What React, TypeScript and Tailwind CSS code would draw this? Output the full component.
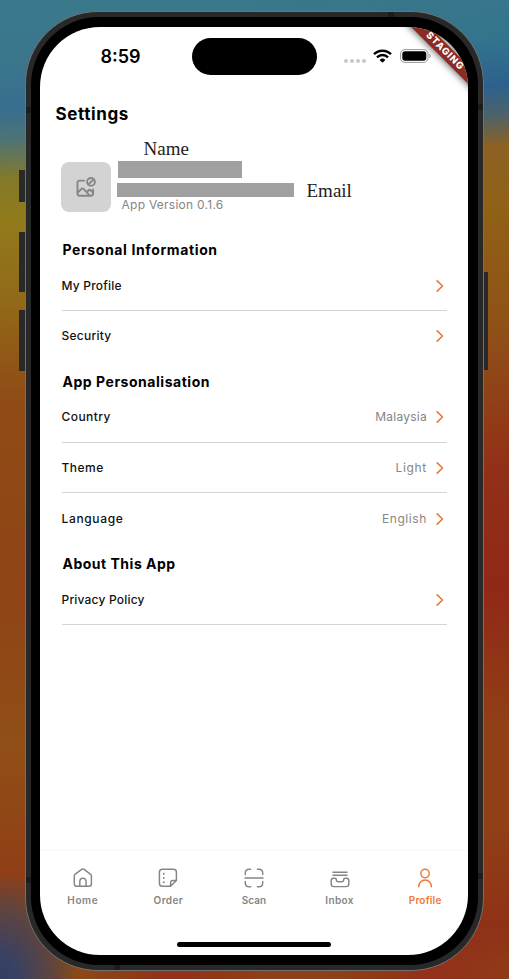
import type { ReactNode } from "react";

const headings = "font-['Inter','Liberation_Sans',sans-serif] font-bold text-black";

function Chevron() {
  return (
    <svg width="8" height="12" viewBox="0 0 8 12" fill="none" stroke="#e9783a" strokeWidth="1.6" strokeLinecap="round" strokeLinejoin="round">
      <path d="M1.2 .9 6.5 6 1.2 11.1" />
    </svg>
  );
}

function Row({ label, spacing, value, valueSpacing = "", divider = false }: { label: string; spacing: string; value?: string; valueSpacing?: string; divider?: boolean }) {
  return (
    <div className={`flex h-[50.7px] items-center border-b pt-[1px] pr-[3.5px] text-[12px] ${divider ? "border-[#d4d4d4]" : "border-transparent"}`}>
      <span className={`font-medium text-[#111] ${spacing}`}>{label}</span>
      <span className="flex-1" />
      {value && <span className={`mr-[8.5px] text-[#858585] ${valueSpacing}`}>{value}</span>}
      <Chevron />
    </div>
  );
}

function Section({ title, spacing, children }: { title: string; spacing: string; children: ReactNode }) {
  return (
    <section>
      <h2 className={`flex h-[30.3px] items-end pb-[1px] pl-[1px] text-[14px] leading-[18px] ${headings} ${spacing}`}>{title}</h2>
      {children}
    </section>
  );
}

function NavItem({ label, active = false, spacing, children }: { label: string; active?: boolean; spacing: string; children: ReactNode }) {
  return (
    <div className={`flex flex-1 flex-col items-center pt-[16.5px] ${active ? "text-[#e9783a]" : "text-[#858585]"}`}>
      <svg width="20" height="20" viewBox="0 0 20 20" fill="none" stroke="currentColor" strokeWidth="1.45" strokeLinecap="round" strokeLinejoin="round">
        {children}
      </svg>
      <span className={`mt-[5.5px] text-[10px] leading-[14px] font-semibold ${spacing}`}>{label}</span>
    </div>
  );
}

function StatusBar() {
  return (
    <div className="flex h-[59px] items-center">
      <div className="ml-[60.5px] w-[91px] pt-[1px] text-[18px] leading-[22px] font-semibold">8:59</div>
      <div className="h-[37px] w-[125px] rounded-full bg-black" />
      <div className="mt-[8px] ml-[27.5px] flex gap-[2px]">
        <i className="size-[4px] rounded-full bg-[#c9c9c9]" />
        <i className="size-[4px] rounded-full bg-[#c9c9c9]" />
        <i className="size-[4px] rounded-full bg-[#c9c9c9]" />
        <i className="size-[4px] rounded-full bg-[#c9c9c9]" />
      </div>
      <svg className="mb-[2px] ml-[7px]" width="19" height="14" viewBox="0 0 19 14" fill="none" stroke="#000" strokeWidth="2.4">
        <path d="M1 5.2a12.1 12.1 0 0 1 17 0M4 8.3a7.8 7.8 0 0 1 11 0" />
        <path d="M6.6 10.9a4.1 4.1 0 0 1 5.8 0L9.5 13.8Z" fill="#000" stroke="none" />
      </svg>
      <svg className="mb-[1px] ml-[7.5px]" width="31" height="14" viewBox="0 0 31 14">
        <rect x=".6" y=".6" width="27.4" height="12.8" rx="4.2" fill="none" stroke="#999" />
        <rect x="2.3" y="2.2" width="24" height="9.6" rx="2.8" />
        <path d="M29.4 4.8c1.7.7 1.7 3.7 0 4.4Z" fill="#999" />
      </svg>
    </div>
  );
}

export default function App() {
  return (
    <div className="relative h-[979px] w-[509px] overflow-hidden bg-[#8e4a15] pt-[11px] pl-[25px] font-['Inter','Liberation_Sans',sans-serif]">
      <div className="absolute inset-y-0 left-0 w-[255px] bg-[linear-gradient(177deg,#3a7a8c_0%,#3b768c_6%,#386e90_11%,#4d7377_14%,#83792a_18%,#917b1c_22%,#926a19_30%,#8f4c15_40%,#8f4316_60%,#904f16_75%,#903f16_88%,#8f4316_100%)]" />
      <div className="absolute inset-y-0 right-0 w-[254px] bg-[linear-gradient(174deg,#39778b_0%,#34758d_6%,#2c618d_11%,#4d6269_14%,#8c6123_17%,#906116_23%,#8f5117_35%,#923017_49%,#902817_61%,#904016_75%,#903f16_85%,#8f2e17_97%,#943516_100%)]" />
      <div className="absolute inset-x-0 bottom-0 h-[60px] bg-[linear-gradient(90deg,#6d4a35_0px,#8b4a15_75px,#93301a_170px,#904016_270px,#8f3f16_340px,#93301a_430px,#8f3a18_509px)] mask-[linear-gradient(to_top,black_30%,transparent)]" />
      <div className="absolute bottom-0 left-0 h-[110px] w-[80px] bg-[radial-gradient(78px_108px_at_0%_100%,#304064_0%,#3b4162_25%,#5e443f_65%,#8b4a1500_100%)]" />

      <i className="absolute top-[170px] left-[19px] h-[32px] w-[8px] bg-[#292929]" />
      <i className="absolute top-[232px] left-[19px] h-[60px] w-[8px] bg-[#292929]" />
      <i className="absolute top-[310px] left-[19px] h-[61px] w-[8px] bg-[#292929]" />
      <i className="absolute top-[272px] left-[482px] h-[98px] w-[6px] bg-[#292929]" />

      <div className="relative h-[960px] w-[459px] rounded-[73px] border border-[#707270] bg-[#282828] p-[5px]">
        <i className="absolute top-[95px] left-0 h-[6px] w-[5px] bg-[#1c1c1c]" />
        <i className="absolute top-[865px] left-0 h-[6px] w-[5px] bg-[#1c1c1c]" />
        <i className="absolute top-[92px] right-0 h-[6px] w-[5px] bg-[#1c1c1c]" />
        <i className="absolute top-[861px] right-0 h-[6px] w-[5px] bg-[#1c1c1c]" />
        <i className="absolute top-0 left-[362px] h-[5px] w-[6px] bg-[#1c1c1c]" />
        <i className="absolute bottom-0 left-[88px] h-[5px] w-[6px] bg-[#1c1c1c]" />
        <div className="relative h-[948px] w-[447px] rounded-[68px] bg-black pt-[10px] pl-[9px]">
          <div className="relative flex h-[928px] w-[428px] flex-col overflow-hidden rounded-[60px] bg-white">
            <StatusBar />
            <div className="absolute top-[17.5px] left-[354.5px] flex h-[12.5px] w-[100px] rotate-45 items-center justify-center bg-[#8e2a21] text-[9.5px] leading-[12px] font-extrabold tracking-[0.9px] text-white shadow-[0_0_7px_1px_#0009]">
              STAGING
            </div>
            <h1 className={`mt-[16px] ml-[15.5px] h-[24px] text-[17px] leading-[24px] ${headings} tracking-[0.6px]`}>Settings</h1>

            <div className="ml-[21px] flex h-[104px] pt-[8px]">
              <div className="mt-[28px] flex size-[50px] items-center justify-center rounded-[8px] bg-[#d3d3d3]">
                <svg width="20" height="20" viewBox="0 0 20 20" fill="none" stroke="#858585" strokeWidth="1.9" strokeLinecap="round" strokeLinejoin="round">
                  <path d="M8.2 3.6H3.7C2.2 3.6 1.5 4.3 1.5 5.8v10.8c0 1.5.7 2.2 2.2 2.2h11.2c1.5 0 2.2-.7 2.2-2.2v-4.2M2 15.4l3.2-3.3c.9-.9 1.7-.9 2.6 0l6 6.5M10.8 15l1.6-1.5c.8-.8 1.7-.8 2.5 0l2.2 2.1" />
                  <circle cx="15" cy="4.9" r="3.9" />
                  <path d="m12.5 7.4 5-5" />
                </svg>
              </div>
              <div className="ml-[5.5px] pt-[3px]">
                <div className="pl-[27px] font-['Liberation_Serif',serif] text-[19px] leading-[24px] text-[#222]">Name</div>
                <div className="ml-[1px] h-[17px] w-[124px] bg-[#a0a0a0]" />
                <div className="mt-[5px] flex h-[14px] items-center">
                  <div className="h-[14px] w-[177px] bg-[#a0a0a0]" />
                  <span className="mt-[1px] ml-[13px] font-['Liberation_Serif',serif] text-[19px] leading-[20px] text-[#222]">Email</span>
                </div>
                <div className="pl-[5px] text-[12px] leading-[15px] tracking-[0.26px] text-[#858585]">App Version 0.1.6</div>
              </div>
            </div>

            <main className="ml-[21.5px] w-[385.5px]">
              <Section title="Personal Information" spacing="tracking-[0.62px]">
                <Row label="My Profile" spacing="tracking-[0.2px]" divider />
                <Row label="Security" spacing="tracking-[0.25px]" />
              </Section>
              <Section title="App Personalisation" spacing="tracking-[0.53px]">
                <Row label="Country" spacing="tracking-[0.45px]" value="Malaysia" valueSpacing="tracking-[0.25px]" divider />
                <Row label="Theme" spacing="tracking-[0.5px]" value="Light" valueSpacing="tracking-[0.7px]" divider />
                <Row label="Language" spacing="tracking-[0.65px]" value="English" valueSpacing="tracking-[0.6px]" />
              </Section>
              <Section title="About This App" spacing="tracking-[0.5px]">
                <Row label="Privacy Policy" spacing="tracking-[0.19px]" divider />
              </Section>
            </main>

            <nav className="mt-auto flex h-[105px] border-t border-[#f8f8f8]">
              <NavItem label="Home" spacing="tracking-[0.6px]">
                <path d="M1.3 7.6v8.5c0 1.5.7 2.1 2.1 2.1h12.8c1.5 0 2.2-.7 2.2-2.1V7.8c0-.7-.3-1.1-.8-1.5l-6.8-5.1c-.6-.4-1.1-.4-1.7 0L2.1 6.2c-.5.4-.8.8-.8 1.4Z" />
                <path d="M6.8 18v-4.6c0-4.2 6.3-4.2 6.3 0V18" />
              </NavItem>
              <NavItem label="Order" spacing="tracking-[0.4px]">
                <path d="M18.4 12.5V4.2c0-2-.9-3-2.9-3H4.4c-2 0-3 1-3 3v11.1c0 2 1 3 3 3h8.1l5.9-5.8ZM12.6 18v-3.3c0-1.5.7-2.2 2.2-2.2h3.4" />
                <path d="M5.8 5.6v.1M5.8 9.9v.1M5.8 14.1v.1" strokeWidth="1.9" />
              </NavItem>
              <NavItem label="Scan" spacing="tracking-[0.05px]">
                <path d="M1.3 6.6V5.1c0-2.6 1.2-3.8 3.8-3.8h1.5M13.4 1.3h1.5c2.6 0 3.8 1.2 3.8 3.8v1.5M18.7 13.4v1.5c0 2.6-1.2 3.8-3.8 3.8h-1.5M6.6 18.7H5.1c-2.6 0-3.8-1.2-3.8-3.8v-1.5M1 10h18" />
              </NavItem>
              <NavItem label="Inbox" spacing="tracking-[0.4px]">
                <path d="M3 4.2h14M3 7.2h14" />
                <path d="M5 10.2H3.6c-1.6 0-2.4.8-2.4 2.3v3.8c0 1.5.8 2.3 2.4 2.3h12.8c1.6 0 2.4-.8 2.4-2.3v-3.8c0-1.5-.8-2.3-2.4-2.3H15c-1 0-1.3.4-1.3 1.2 0 1.6-.7 2.3-2.2 2.3h-3c-1.5 0-2.2-.7-2.2-2.3 0-.8-.3-1.2-1.3-1.2Z" />
              </NavItem>
              <NavItem label="Profile" active spacing="tracking-[0.2px]">
                <circle cx="10" cy="5.5" r="4.2" />
                <path d="M3.7 18.8C3.7 9.7 16.4 9.7 16.4 18.8" />
              </NavItem>
            </nav>
            <i className="absolute bottom-[8px] left-[137px] h-[5px] w-[154px] rounded-full bg-black" />
          </div>
        </div>
      </div>
    </div>
  );
}
